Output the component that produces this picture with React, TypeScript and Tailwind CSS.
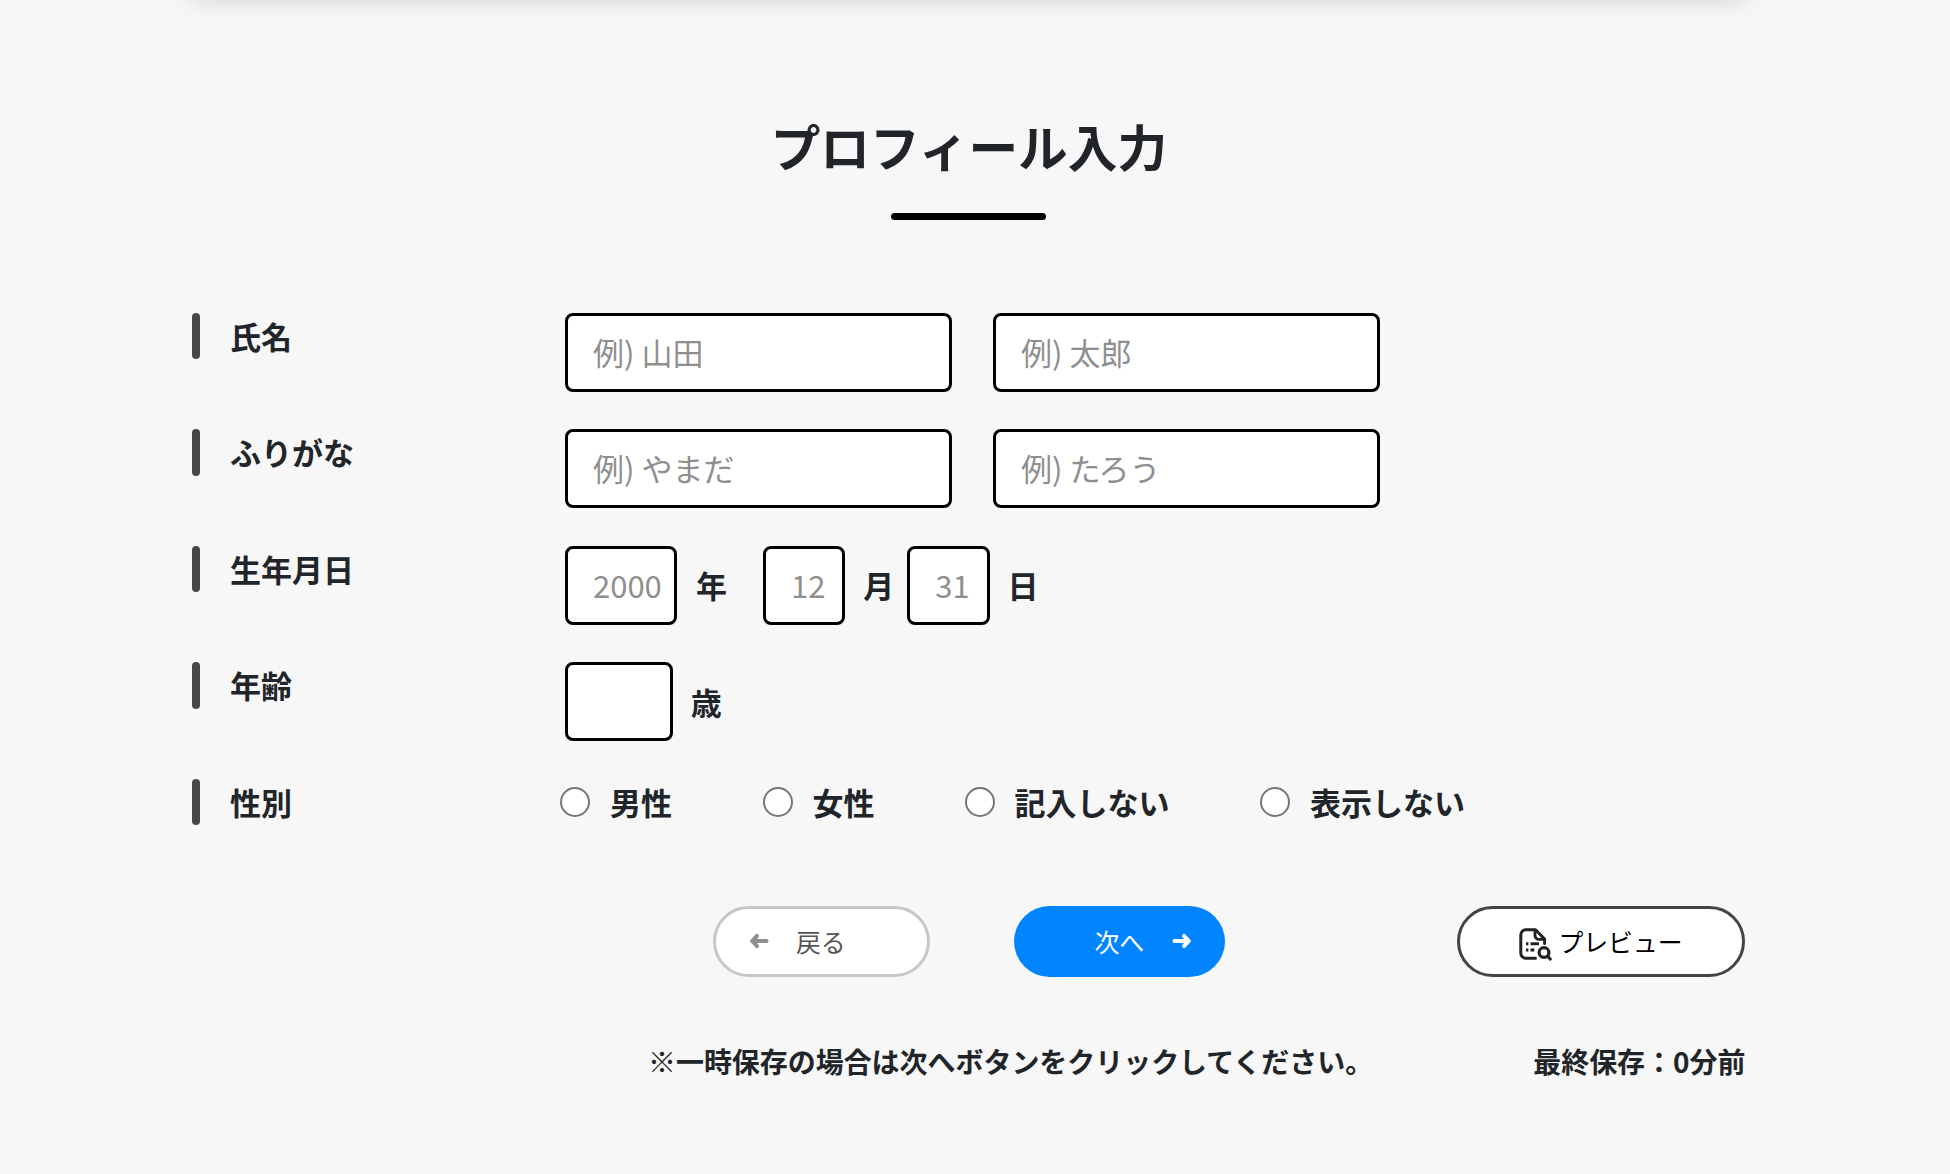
import type { ReactNode } from 'react';

const inputClass =
  'box-border h-[79px] rounded-[8px] border-[3px] border-black bg-white pb-[2px] pl-[25px] text-[31px] text-[#212529] outline-none placeholder:text-[#8f8f8f] placeholder:opacity-100';

const genders = [
  { value: 'male', label: '男性', width: 'w-[202.6px]' },
  { value: 'female', label: '女性', width: 'w-[202px]' },
  { value: 'blank', label: '記入しない', width: 'w-[295.4px]' },
  { value: 'hidden', label: '表示しない', width: 'w-[210px]' },
];

const ArrowIcon = ({ className }: { className: string }) => (
  <svg
    className={className}
    width="20"
    height="16"
    viewBox="0 0 20 16"
    fill="none"
    stroke="currentColor"
    strokeWidth="4"
    strokeLinecap="round"
    strokeLinejoin="round"
  >
    <path d="M2.5 8H16.5" />
    <path d="M12 2.9L16.8 8L12 13.1" />
    <path d="M12.5 5L16 8L12.5 11Z" fill="currentColor" strokeWidth="1" />
  </svg>
);

const PreviewIcon = () => (
  <svg width="33" height="34" viewBox="0 0 33 34" fill="none" stroke="#222" strokeLinejoin="round">
    {/* Document */}
    <path
      d="M16.5 30.2H6.8a5 5 0 0 1-5-5V6.8a5 5 0 0 1 5-5H16.5L25.6 11V15.5"
      strokeWidth="3"
      strokeLinecap="round"
    />
    <path d="M16 2V7.5a3.8 3.8 0 0 0 3.8 3.8H25.5" strokeWidth="2.8" />
    {/* Lines */}
    <path d="M7 15.8H9.4M11.5 15.8H20M7 22H9.4M11.5 22H15.3" strokeWidth="3" />
    {/* Magnifier */}
    <circle cx="25" cy="24.5" r="4.9" strokeWidth="3.2" />
    <path d="M28.6 28.2L31.2 31" strokeWidth="3.2" strokeLinecap="round" />
  </svg>
);

const FormRow = ({ label, children }: { label: string; children: ReactNode }) => (
  <div className="flex h-[116.5px] items-start">
    <div className="flex w-[372.6px] shrink-0 items-center">
      <span className="h-[46.6px] w-[8px] rounded-full bg-[#474747]" />
      <span className="pl-[29.6px] text-[31px] leading-[46.6px] font-bold">{label}</span>
    </div>
    {children}
  </div>
);

const Unit = ({ children, className }: { children: ReactNode; className: string }) => (
  <span className={`text-[31px] leading-[46.6px] font-bold ${className}`}>{children}</span>
);

const App = () => {
  return (
    <div className="h-[1174px] w-[1950px] overflow-hidden bg-[#f7f7f7] font-['Noto_Sans_CJK_JP',sans-serif] text-[#212529]">
      <div className="ml-[192.4px] w-[1553px]">
        {/* Bottom edge of the card above */}
        <div className="-mt-[92px] h-20 rounded-[8px] bg-white shadow-[0_12.4px_24px_rgba(0,0,0,0.15)]" />

        <h1 className="mt-[120px] text-center text-[49.7px] leading-[74px] font-bold">プロフィール入力</h1>
        <div className="mx-auto mt-[31px] h-[7px] w-[155px] rounded-full bg-black" />

        <form className="mt-[92.9px]" onSubmit={(e) => e.preventDefault()}>
          <FormRow label="氏名">
            <div className="flex gap-[40.6px]">
              <input className={`${inputClass} w-[387.4px]`} placeholder="例) 山田" />
              <input className={`${inputClass} w-[387.4px]`} placeholder="例) 太郎" />
            </div>
          </FormRow>

          <FormRow label="ふりがな">
            <div className="flex gap-[40.6px]">
              <input className={`${inputClass} w-[387.4px]`} placeholder="例) やまだ" />
              <input className={`${inputClass} w-[387.4px]`} placeholder="例) たろう" />
            </div>
          </FormRow>

          <FormRow label="生年月日">
            <div className="flex items-center">
              <input className={`${inputClass} w-[112.5px]`} placeholder="2000" />
              <Unit className="w-[85.5px] pl-[18.5px]">年</Unit>
              <input className={`${inputClass} w-[82.3px]`} placeholder="12" />
              <Unit className="w-[62px] pl-[18px]">月</Unit>
              <input className={`${inputClass} w-[82.3px]`} placeholder="31" />
              <Unit className="pl-[18px]">日</Unit>
            </div>
          </FormRow>

          <FormRow label="年齢">
            <div className="flex items-center">
              <input className={`${inputClass} w-[107.7px]`} />
              <Unit className="pl-[18px]">歳</Unit>
            </div>
          </FormRow>

          <FormRow label="性別">
            <div className="-ml-[5px] flex">
              {genders.map((gender) => (
                <label key={gender.value} className={`flex items-center ${gender.width}`}>
                  <input
                    type="radio"
                    name="gender"
                    value={gender.value}
                    className="h-[30.5px] w-[30.5px] shrink-0 appearance-none rounded-full border-2 border-[#767676] bg-white"
                  />
                  <span className="pl-[19.5px] text-[31px] leading-[46.6px] font-bold whitespace-nowrap">
                    {gender.label}
                  </span>
                </label>
              ))}
            </div>
          </FormRow>

          {/* Buttons */}
          <div className="mt-[10.5px] flex h-[70.7px] pl-[520.6px]">
            <button className="flex w-[217px] items-center rounded-full border-[3px] border-[#c7c7c7] bg-white pl-[33px] text-[24.85px] text-[#555]">
              <ArrowIcon className="rotate-180 text-[#8f8f8f]" />
              <span className="pl-[27px]">戻る</span>
            </button>
            <button className="ml-[84px] flex w-[211px] items-center rounded-full bg-[#0084ff] pl-[80.5px] text-[24.85px] text-white">
              <span className="pr-[27.5px]">次へ</span>
              <ArrowIcon className="text-white" />
            </button>
            <button className="ml-auto flex w-[288px] items-center rounded-full border-[3px] border-[#444] bg-white pl-[59px] text-[24.85px] text-black">
              <span className="pt-[8px]">
                <PreviewIcon />
              </span>
              <span className="pl-[6px]">プレビュー</span>
            </button>
          </div>
        </form>

        <div className="mt-[63.5px] flex justify-between pl-[455.6px] text-[27.96px] leading-[42px] font-bold whitespace-nowrap">
          <p>※一時保存の場合は次へボタンをクリックしてください。</p>
          <p>最終保存：0分前</p>
        </div>
      </div>
    </div>
  );
};

export default App;
